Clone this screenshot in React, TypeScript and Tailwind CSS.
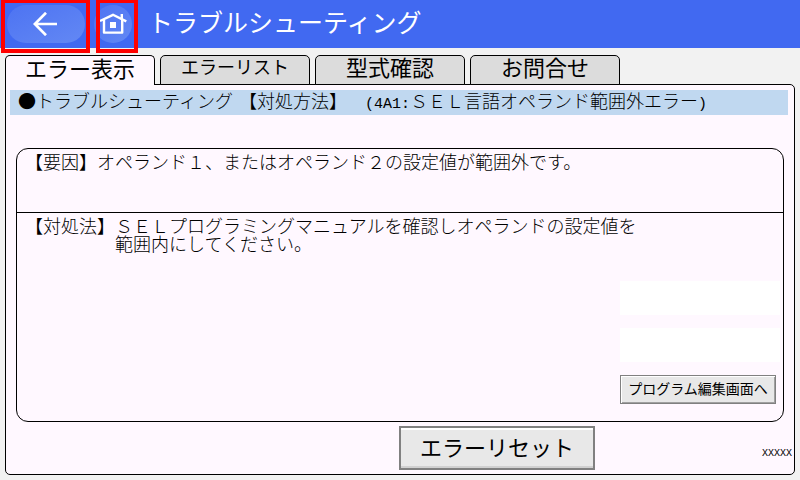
import type { ReactNode } from "react";

type Tab = { label: string; small?: boolean };

const tabs: Tab[] = [
  { label: "エラー表示" },
  { label: "エラーリスト", small: true },
  { label: "型式確認" },
  { label: "お問合せ" },
];

/** Header button with the red guide frame drawn around it. */
function NavButton({ label, className, frame, children }: { label: string; className: string; frame: string; children: ReactNode }) {
  return (
    <div className="relative">
      <button
        type="button"
        aria-label={label}
        className={`flex h-[38px] items-center justify-center rounded-full bg-gradient-to-br from-[#4d73f2] to-[#6388f4] text-white ${className}`}
      >
        {children}
      </button>
      <span aria-hidden className={`pointer-events-none absolute -top-[5px] z-10 h-[53px] border-4 border-t-[3px] border-[#ff0000] ${frame}`} />
    </div>
  );
}

function Header() {
  return (
    <header className="flex h-12 items-start bg-[#4169f1] pt-[5px] pl-[7px]">
      <NavButton label="戻る" className="w-[78px] pr-0.5" frame="-left-[6px] w-[89px]">
        <svg viewBox="0 0 24 24" className="h-6 w-6" fill="none" stroke="currentColor" strokeWidth="2.7" aria-hidden>
          <path d="M13 0.8 L1.8 12 L13 23.2 M1.8 12 H24" />
        </svg>
      </NavButton>
      <div className="ml-[9px]">
        <NavButton label="ホーム" className="w-[38px]" frame="left-[2px] w-[42px]">
          <svg viewBox="0 0 28 22" className="h-[22px] w-7" fill="none" stroke="currentColor" strokeWidth="2.4" aria-hidden>
            <path d="M1 8 L14 1.8 L27.3 8.4" />
            <path d="M5 7 V19.6 H23.2 V7" strokeLinejoin="round" />
            <path d="M22.8 6 V1" />
            <rect x="11" y="9" width="6" height="6" fill="currentColor" stroke="none" />
          </svg>
        </NavButton>
      </div>
      <h1 className="ml-4 text-[25px] leading-8 text-white">トラブルシューティング</h1>
    </header>
  );
}

function TabBar() {
  return (
    <nav role="tablist" className="relative -mb-px flex gap-[5px]">
      {tabs.map((tab, i) => (
        <button
          key={tab.label}
          type="button"
          role="tab"
          aria-selected={i === 0}
          className={`h-[30px] w-[150px] rounded-t-[5px] border border-black pb-2 leading-5 ${tab.small ? "text-[18px]" : "text-[22px]"} ${
            i === 0 ? "border-b-0 bg-[#fff8ff]" : "bg-[#dcdcdc]"
          }`}
        >
          {tab.label}
        </button>
      ))}
    </nav>
  );
}

function PanelButton({ className, children }: { className: string; children: ReactNode }) {
  return (
    <button type="button" className={`border-[#808080] bg-[#e8e8e8] ${className}`}>
      {children}
    </button>
  );
}

export default function App() {
  return (
    <div className="flex min-h-screen flex-col bg-[#f2f2f2] font-['Noto_Sans_CJK_JP',sans-serif] text-black">
      <Header />
      <main className="flex grow flex-col px-[5px] pt-[7px] pb-[5px]">
        <TabBar />
        <div className="flex grow flex-col rounded-b-[5px] rounded-tr-[5px] border border-black bg-[#fff8ff]">
          <h2 className="mt-[5px] mr-[6px] ml-1 flex h-[25px] items-baseline bg-[#c0d8f0] pt-px pl-2 text-[18px] leading-[18px] font-light whitespace-nowrap">
            <span>●トラブルシューティング</span>
            <span className="ml-[6px]">【対処方法】</span>
            <span className="ml-[18px] font-['Liberation_Mono',monospace] text-[15px]">(4A1:</span>
            <span>ＳＥＬ言語オペランド範囲外エラー</span>
            <span className="font-['Liberation_Mono',monospace] text-[15px]">)</span>
          </h2>

          <div className="mx-[10px] mt-[33px] flex grow flex-col rounded-xl border border-black text-[18px] leading-[18px] font-light">
            <section className="h-16 border-b border-black pt-[3px] pl-2">
              <p>【要因】オペランド１、またはオペランド２の設定値が範囲外です。</p>
            </section>
            <section className="flex grow flex-col pt-[3px] pl-2">
              <div className="flex">
                <h3>【対処法】</h3>
                <p>
                  ＳＥＬプログラミングマニュアルを確認しオペランドの設定値を
                  <br />
                  範囲内にしてください。
                </p>
              </div>
              <div className="mt-[29px] mr-[3px] mb-4 w-40 self-end">
                <div className="h-[34px] bg-white" />
                <div className="mt-[13px] h-[34px] bg-white" />
                <PanelButton className="mt-[13px] h-[29px] w-[156px] border pb-1 text-[14px] leading-5 font-normal shadow-[inset_1px_1px_0_#fff,inset_-1px_-1px_0_#a0a0a0]">
                  プログラム編集画面へ
                </PanelButton>
              </div>
            </section>
          </div>

          <footer className="mt-1 mb-1 grid grid-cols-2 items-center pr-0.5">
            <PanelButton className="col-start-2 row-start-1 h-11 w-[196px] border-2 pb-1 text-[22px] leading-8 shadow-[inset_0_2px_0_#fff,inset_0_-2px_0_#d0d0d0]">
              エラーリセット
            </PanelButton>
            <span className="col-start-2 row-start-1 justify-self-end pt-3 font-['Liberation_Mono',monospace] text-[10px] leading-4">XXXXX</span>
          </footer>
        </div>
      </main>
    </div>
  );
}
